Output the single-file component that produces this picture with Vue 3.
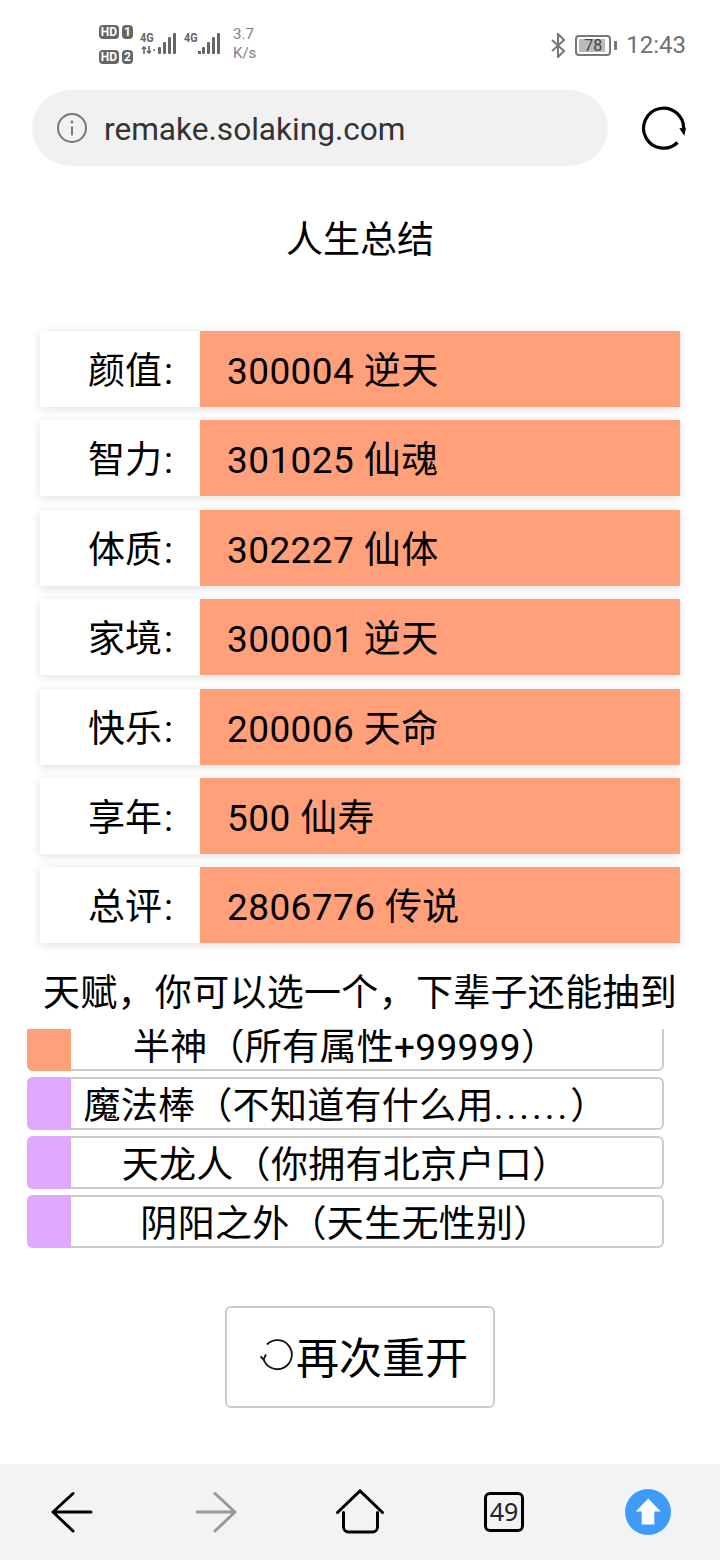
<template>
  <div class="phone">
    <header class="status">
      <div class="sims">
        <div class="sim"><span class="hd">HD</span><span class="slot">1</span></div>
        <div class="sim"><span class="hd">HD</span><span class="slot">2</span></div>
      </div>
      <div class="signal first">
        <span class="net">4G</span>
        <svg class="arrows" width="14" height="8" viewBox="0 0 14 8"><path d="M3 8V1M1 3l2-2 2 2M8 0v7M6 5l2 2 2-2M12 4h2" fill="none" stroke="#666" stroke-width="1.6"/></svg>
        <svg class="bars" width="18" height="21" viewBox="0 0 18 21"><rect v-for="b in bars" :key="b.x" :x="b.x" :y="b.y" width="3" :height="21 - b.y" rx="1" fill="#666"/></svg>
      </div>
      <div class="signal second">
        <span class="net">4G</span>
        <svg class="bars" width="22" height="21" viewBox="0 0 22 21"><rect width="3" height="3" y="18" x="0" fill="#666"/><rect v-for="b in bars" :key="b.x" :x="b.x + 4" :y="b.y" width="3" :height="21 - b.y" rx="1" fill="#666"/></svg>
      </div>
      <div class="speed"><span>3.7</span><span>K/s</span></div>
      <div class="status-right">
        <svg width="14" height="25" viewBox="0 0 14 25"><path d="M1 7l12 11-6 6V1l6 6L1 18" fill="none" stroke="#777" stroke-width="2"/></svg>
        <div class="battery"><span class="level"></span><span class="pct">78</span></div>
        <span class="cap"></span>
        <span class="clock">12:43</span>
      </div>
    </header>

    <div class="browser">
      <div class="url-pill">
        <svg width="32" height="32" viewBox="0 0 32 32">
          <circle cx="16" cy="16" r="14" fill="none" stroke="#777" stroke-width="2"/>
          <path d="M16 14.5v9" stroke="#777" stroke-width="2"/>
          <circle cx="16" cy="10" r="1.4" fill="#777"/>
        </svg>
        <span class="url">remake.solaking.com</span>
      </div>
      <svg class="reload" width="48" height="48" viewBox="0 0 48 48">
        <path d="M37.5 38.5A20 20 0 1 1 43.5 26" fill="none" stroke="#000" stroke-width="3.2"/>
        <path d="M39.3 24.3L46 23.7 44.3 31.7z" fill="#000"/>
      </svg>
    </div>

    <h1 class="title">人生总结</h1>

    <ul class="summary">
      <li v-for="row in summary" :key="row.label" class="summary-row">
        <span class="label">{{ row.label }}<span class="colon">:</span></span>
        <span class="value">{{ row.value }}</span>
      </li>
    </ul>

    <p class="talent-title">天赋，你可以选一个，下辈子还能抽到</p>

    <div class="talent-scroll">
      <ul class="talents">
        <li v-for="t in talents" :key="t.text" class="talent">
          <span class="swatch" :class="t.grade"></span>
          {{ t.text }}<span v-if="t.dots" class="dots">{{ t.dots }}</span>{{ t.tail }}
        </li>
      </ul>
    </div>

    <button class="again">
      <svg width="34" height="34" viewBox="0 0 34 34">
        <path d="M7 6.500A14.500 14.500 0 1 1 3.500 21" fill="none" stroke="#111" stroke-width="1.8"/>
        <path d="M0.500 18.500L3.500 21.500 6 16.500" fill="none" stroke="#111" stroke-width="1.8"/>
      </svg>
      <span class="again-text">再次重开</span>
    </button>

    <nav class="toolbar">
      <svg width="48" height="48" viewBox="0 0 48 48"><path d="M5 24H43M25 5.500L5 24 25 43" fill="none" stroke="#000" stroke-width="3" stroke-linecap="round" stroke-linejoin="round"/></svg>
      <svg width="48" height="48" viewBox="0 0 48 48"><path d="M5 24H43M23 5.500L43 24 23 43" fill="none" stroke="#999" stroke-width="3" stroke-linecap="round" stroke-linejoin="round"/></svg>
      <svg width="48" height="48" viewBox="0 0 48 48"><path d="M1.500 24.500L24 2.800 46.500 24.500" fill="none" stroke="#000" stroke-width="3" stroke-linecap="round" stroke-linejoin="round"/><path d="M7.500 24.500V39a5 5 0 0 0 5 5H36.500a5 5 0 0 0 5-5V24.500" fill="none" stroke="#000" stroke-width="3" stroke-linecap="round"/></svg>
      <div class="tabs">49</div>
      <svg width="48" height="48" viewBox="0 0 48 48"><circle cx="24" cy="24" r="23" fill="#3f9bfa"/><path d="M24.300 10.500L36.700 23.500H30.300V36.500H17.700V23.500H11.700z" fill="#fff"/></svg>
    </nav>
  </div>
</template>

<script setup>
const bars = [
  { x: 0, y: 14 },
  { x: 5, y: 9 },
  { x: 10, y: 4 },
  { x: 15, y: 0 }
];

const summary = [
  { label: '颜值', value: '300004 逆天' },
  { label: '智力', value: '301025 仙魂' },
  { label: '体质', value: '302227 仙体' },
  { label: '家境', value: '300001 逆天' },
  { label: '快乐', value: '200006 天命' },
  { label: '享年', value: '500 仙寿' },
  { label: '总评', value: '2806776 传说' }
];

const talents = [
  { text: '半神（所有属性+99999）', grade: 'orange' },
  { text: '魔法棒（不知道有什么用', dots: '......', tail: '）', grade: 'purple' },
  { text: '天龙人（你拥有北京户口）', grade: 'purple' },
  { text: '阴阳之外（天生无性别）', grade: 'purple' }
];
</script>

<style>
html, body { margin: 0; background: #fff; }
</style>

<style scoped>
.phone {
  width: 720px;
  height: 1560px;
  display: flex;
  flex-direction: column;
  overflow: hidden;
  background: #fff;
  color: #000;
  font-family: "Roboto", "Noto Sans CJK SC", sans-serif;
}

.status {
  height: 90px;
  box-sizing: border-box;
  padding: 25px 0 0 99px;
  display: flex;
  align-items: flex-start;
  color: #666;
}
.sims { display: flex; flex-direction: column; gap: 11px; }
.sim { display: flex; gap: 3px; height: 14px; }
.hd, .slot {
  background: #666;
  color: #fff;
  font: 700 12px/14px "Roboto", sans-serif;
  border-radius: 4px;
  text-align: center;
}
.hd { width: 20px; }
.slot { width: 11px; }
.signal { position: relative; display: flex; height: 21px; margin-top: 8px; }
.signal.first { width: 36px; margin-left: 7px; justify-content: flex-end; }
.signal.second { width: 36px; margin-left: 8px; justify-content: flex-end; }
.net {
  position: absolute;
  left: 0;
  top: -1px;
  font: 700 12px/13px "Roboto", sans-serif;
  transform: scaleX(.9);
  transform-origin: left;
}
.arrows { position: absolute; left: 1px; top: 13px; }
.speed {
  display: flex;
  flex-direction: column;
  margin: 0 0 0 13px;
  font: 15px/19px "Roboto", sans-serif;
  color: #808080;
}
.status-right {
  margin-left: auto;
  margin-right: 34px;
  display: flex;
  align-items: center;
  height: 40px;
}
.battery {
  position: relative;
  width: 36px;
  height: 21px;
  box-sizing: border-box;
  border: 2px solid #777;
  border-radius: 4px;
  margin-left: 10px;
  overflow: hidden;
}
.level { position: absolute; left: 2px; top: 2px; bottom: 2px; width: 26px; background: #bbb; }
.pct {
  position: absolute;
  inset: 0;
  text-align: center;
  font: 16px/17px "Roboto", sans-serif;
  color: #444;
}
.cap { width: 3px; height: 9px; margin-left: 3px; background: #777; }
.clock { margin-left: 9px; font: 24px/40px "Roboto", sans-serif; color: #707070; }

.browser { display: flex; align-items: center; padding-left: 32px; }
.url-pill {
  width: 576px;
  height: 76px;
  box-sizing: border-box;
  padding-left: 24px;
  border-radius: 38px;
  background: #f1f1f2;
  display: flex;
  align-items: center;
  gap: 16px;
}
.url { margin-top: 3px; font-size: 31.600px; line-height: 1; color: #333; }
.reload { margin-left: 32px; }

.title {
  margin: 45px 0 0;
  text-align: center;
  font-size: 37px;
  font-weight: 400;
  line-height: 60px;
}

.summary {
  list-style: none;
  margin: 60px 40px 0;
  padding: 0;
  display: flex;
  flex-direction: column;
  gap: 13.400px;
}
.summary-row {
  display: flex;
  height: 76px;
  font-size: 37px;
  line-height: 70px;
  box-shadow: 0 2px 9px rgba(0, 0, 0, .13);
}
.label { width: 160px; box-sizing: border-box; padding: 6px 27px 0 0; text-align: right; }
.colon { margin-left: 2px; }
.value { flex: 1; padding: 6px 0 0 27px; background: #ffa07a; letter-spacing: .4px; }

.talent-title {
  margin: 26px 0 0;
  height: 60px;
  text-align: center;
  font-size: 37px;
  letter-spacing: .3px;
  line-height: 50px;
}

.talent-scroll { height: 219px; overflow: hidden; margin-left: 27px; width: 637px; }
.talents {
  list-style: none;
  margin: -11px 0 0;
  padding: 0;
  display: flex;
  flex-direction: column;
  gap: 6px;
}
.talent {
  position: relative;
  box-sizing: border-box;
  height: 53px;
  padding-top: 6px;
  border: 2px solid #ccc;
  border-radius: 6px;
  text-align: center;
  font-size: 37px;
  letter-spacing: .3px;
  line-height: 43px;
  white-space: nowrap;
}
.dots { letter-spacing: 3px; }
.swatch {
  position: absolute;
  left: -2px;
  top: -2px;
  bottom: -2px;
  width: 44px;
  border-radius: 6px 0 0 6px;
}
.orange { background: #ffa07a; }
.purple { background: #e2a7ff; }

.again {
  align-self: center;
  margin-top: 58px;
  width: 270px;
  height: 102px;
  padding: 0 0 0 8px;
  border: 2px solid #ccc;
  border-radius: 6px;
  background: #fff;
  color: #000;
  display: flex;
  align-items: center;
  justify-content: center;
  gap: 2px;
  font-family: inherit;
  font-size: 43px;
}
.again svg { margin-top: -4px; }
.again-text { margin-bottom: 4px; }

.toolbar {
  margin-top: auto;
  height: 96px;
  background: #f1f3f5;
  display: grid;
  grid-template-columns: repeat(5, 1fr);
  place-items: center;
}
.tabs {
  width: 40px;
  height: 40px;
  box-sizing: border-box;
  border: 3.400px solid #000;
  border-radius: 6px;
  text-align: center;
  font: 25px/33px "Noto Sans", sans-serif;
  color: #222;
}
</style>
